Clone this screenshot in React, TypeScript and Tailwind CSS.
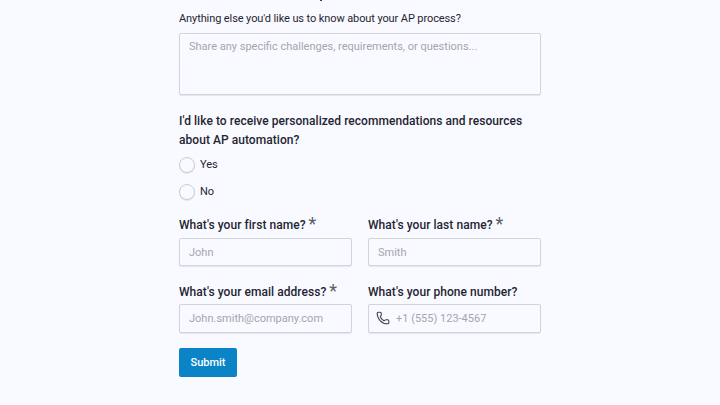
import { Phone } from 'lucide-react';

const labelClass = 'text-[12px] font-medium tracking-[0.05px] text-[#1f2533]';
const inputClass =
  'h-[28.5px] w-full rounded-[2px] border border-[#d0d4db] bg-[#f9faff] px-[9px] pt-[1px] text-[11px] text-[#1f2533] placeholder:text-[#a2a6ae] outline-none shadow-[0_1px_1px_rgba(0,0,0,0.08)]';

const FieldLabel = ({ label, required }: { label: string; required?: boolean }) => (
  <label className={`${labelClass} flex h-[20px] items-center leading-[20px]`}>
    {label}
    {required && <span className="relative top-[-1px] ml-[3px] text-[18px] font-normal leading-none text-[#5a5f6b]">*</span>}
  </label>
);

const Field = ({ label, placeholder, required }: { label: string; placeholder: string; required?: boolean }) => (
  <div className="flex flex-col gap-[2.5px]">
    <FieldLabel label={label} required={required} />
    <input className={inputClass} placeholder={placeholder} />
  </div>
);

const Radio = ({ label }: { label: string }) => (
  <label className="flex h-[17px] items-center gap-[5px] text-[11px] text-[#1f2533]">
    <span className="h-[16px] w-[16px] rounded-full border border-[#c9ccd3] bg-[#f9faff] shadow-[0_1px_1px_rgba(0,0,0,0.08)]" />
    <span className="pt-[2px]">{label}</span>
  </label>
);

export default function App() {
  return (
    <div
      className="flex h-[405px] w-[720px] justify-center overflow-hidden bg-[#f9faff] text-[#1f2533]"
      style={{ fontFamily: 'Roboto, "Liberation Sans", sans-serif' }}
    >
      <form className="flex w-[362px] flex-col">
        {/* tail of a letter from the question scrolled off the top */}
        <div className="ml-[141px] h-[1px] w-[2px] bg-[#3a3f4c]" />
        <label className="mt-[9px] text-[11px] leading-[17px] tracking-[-0.1px] text-[#1f2533]">
          Anything else you'd like us to know about your AP process?
        </label>
        <textarea
          className="mt-[6px] h-[62px] w-full resize-none rounded-[2px] border border-[#d0d4db] bg-[#f9faff] px-[9px] py-[5px] text-[11px] leading-[16px] placeholder:text-[#a2a6ae] outline-none shadow-[0_1px_1px_rgba(0,0,0,0.08)]"
          placeholder="Share any specific challenges, requirements, or questions..."
        />
        <p className={`${labelClass} mt-[17px] leading-[19px]`}>
          I'd like to receive personalized recommendations and resources about AP automation?
        </p>
        <div className="mt-[6px] flex flex-col gap-[10px]">
          <Radio label="Yes" />
          <Radio label="No" />
        </div>
        <div className="mt-[15px] grid grid-cols-2 gap-x-[16px] gap-y-[15.5px]">
          <Field label="What's your first name?" placeholder="John" required />
          <Field label="What's your last name?" placeholder="Smith" required />
          <Field label="What's your email address?" placeholder="John.smith@company.com" required />
          <div className="flex flex-col gap-[2.5px]">
            <FieldLabel label="What's your phone number?" />
            <div className="relative">
              <Phone className="absolute left-[8px] top-[7px] h-[14px] w-[14px] text-[#3a4150]" strokeWidth={1.8} />
              <input className={`${inputClass} pl-[27px]`} placeholder="+1 (555) 123-4567" />
            </div>
          </div>
        </div>
        <button
          type="button"
          className="mt-[15.5px] h-[28.5px] w-[58px] rounded-[2px] bg-[#0a84c6] pt-[1px] text-[11px] font-medium text-white"
        >
          Submit
        </button>
      </form>
    </div>
  );
}
